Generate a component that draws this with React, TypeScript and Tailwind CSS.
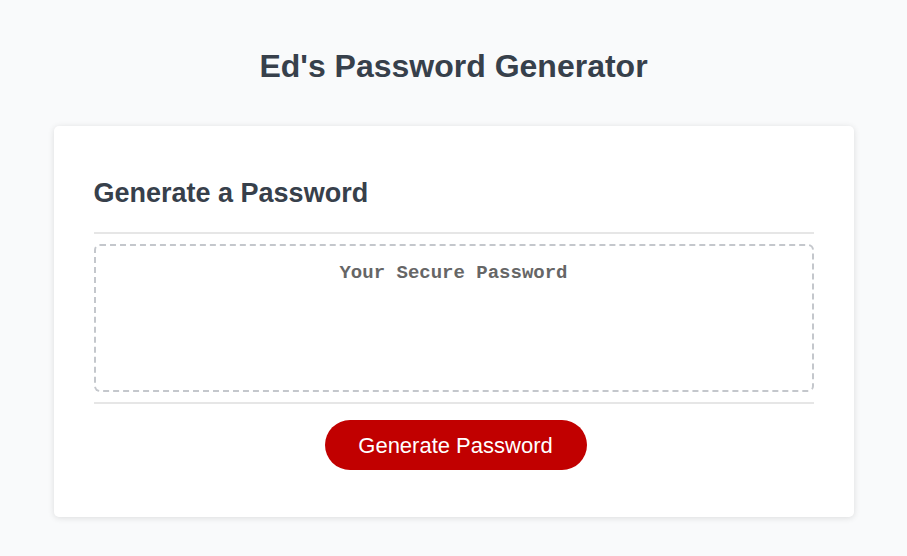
export default function App() {
  return (
    <div className="min-h-[556px] bg-[#f9fafb] pt-[46px] font-['Liberation_Sans',Arial,sans-serif]">
      <h1 className="text-center text-[32px] font-bold leading-[40px] text-[#37404b]">Ed's Password Generator</h1>

      <div className="mx-auto mt-[40px] w-[800px] rounded-[5px] bg-white px-10 pb-[47px] pt-[52px] shadow-[0_1px_6px_rgba(0,0,0,0.12)]">
        <h2 className="text-[27px] font-bold leading-[30px] text-[#37404b]">Generate a Password</h2>
        <div className="mt-[24px] h-[2px] bg-[#e6e6e6]" />
        <div className="mt-[10px] h-[148px] rounded-[6px] border-2 border-dashed border-[#c4c7cc] pt-[15px] text-center">
          <span className="font-['Liberation_Mono','Courier_New',monospace] text-[19px] leading-[22px] font-semibold text-[#666666]">
            Your Secure Password
          </span>
        </div>
        <div className="mt-[10px] h-[2px] bg-[#e6e6e6]" />
        <div className="mt-[16px] flex justify-center">
          <button className="ml-1 h-[50px] w-[262px] rounded-full bg-[#c10000] text-[22px] text-white">Generate Password</button>
        </div>
      </div>
    </div>
  );
}
